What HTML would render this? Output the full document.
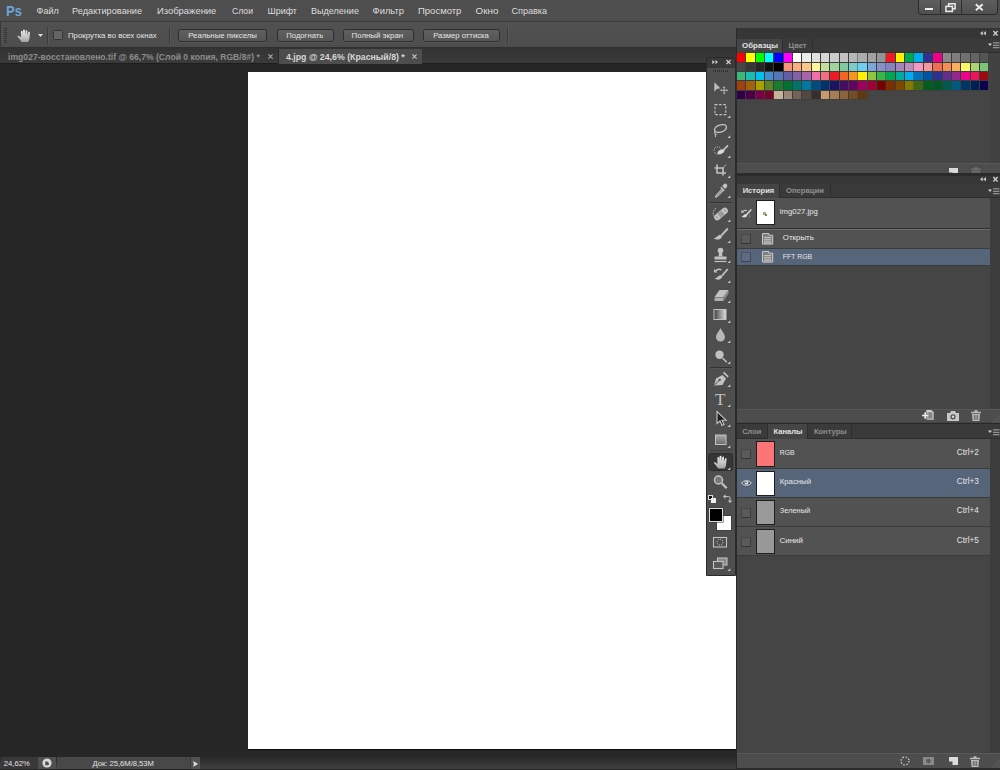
<!DOCTYPE html><html lang="ru"><head><meta charset="utf-8"><title>Photoshop</title><style>
*{box-sizing:border-box;margin:0;padding:0}
html,body{width:1000px;height:770px;overflow:hidden;background:#262626}
body{position:relative;font-family:"Liberation Sans",sans-serif;font-size:9.4px;color:#d6d6d6}
div,span,i,svg{position:absolute;display:block;white-space:nowrap}
i{font-style:normal}
svg{overflow:visible}
/* menu */
#menubar{left:0;top:0;width:1000px;height:22px;background:#4e4e4e;border-bottom:1px solid #3c3c3c}

#ps{left:6px;top:0px;font-size:16px;font-weight:bold;color:#6ea6dd;line-height:20px;letter-spacing:0.5px}
/* options bar */
#optbar{left:0;top:22px;width:1000px;height:26px;background:linear-gradient(#515151,#4d4d4d);border-bottom:1px solid #303030;border-left:1px solid #383838}


.vsep{width:1px;background:#3c3c3c;box-shadow:1px 0 0 #595959}
/* tab bar */
#tabbar{left:0;top:48px;width:736px;height:16px;background:linear-gradient(#333,#3b3b3b);border-bottom:1px solid #1e1e1e}
.dtab{top:49px;height:15px;font-weight:bold;font-size:8.6px;line-height:15px}
/* right dock */
.strip{left:0;width:263px;background:#363636}
.tabrow{left:0;width:263px;background:#3a3a3a;border-bottom:1px solid #2e2e2e}
.ptab{top:0;height:100%;font-size:8.8px;font-weight:bold;color:#8f8f8f;border-right:1px solid #2e2e2e}
.ptab.on{background:#454545;color:#e0e0e0}
.ptab span{left:0;right:0;text-align:center;top:0}
.botbar{left:0;width:263px;background:#4c4c4c;border-top:1px solid #5a5a5a}
i.s{width:8.5px;height:8.4px;box-shadow:0 0 0 .45px #3a3a3a}
.row{left:0;width:253px;border-bottom:1px solid #3a3a3a}
.row.sel{background:#56637a}
.row span{font-size:9px;color:#e4e4e4}
.eyebox{width:10px;height:10px;background:#505050;border:1px solid #3a3a3a;border-right-color:#5c5c5c;border-bottom-color:#5c5c5c}
.thumb{width:19px;height:25px;border:1px solid #222}
/* toolbar */
#tools{left:705.5px;top:56.5px;width:30px;height:519.5px;background:#4e4e4e;border:1px solid #2a2a2a;border-radius:2px 2px 0 0}
#tools .hd{left:0;top:0;width:28px;height:10px;background:#383838}
#tools svg{left:0;width:28px;overflow:visible}
.hsep{left:3px;width:22px;height:1px;background:#333;box-shadow:0 1px 0 #565656}
/* status */
#status{left:0;top:756.5px;width:736px;height:12px;background:linear-gradient(#292929,#414141)}
</style></head><body>
<div style="left:248px;top:72.4px;width:500px;height:676.7px;background:#fff;box-shadow:0 1px 0 #0c0c0c"></div>
<div id="menubar"></div><span style="left:6.00px;top:1px;font-size:15.40px;line-height:19px;color:#6ba3da;font-weight:bold;transform:scaleX(0.848);transform-origin:0 0;">Ps</span><span style="left:36.60px;top:5px;font-size:9.02px;line-height:12px;color:#dedede;">Файл</span><span style="left:72.00px;top:5px;font-size:9.21px;line-height:12px;color:#dedede;">Редактирование</span><span style="left:157.00px;top:4px;font-size:9.43px;line-height:13px;color:#dedede;">Изображение</span><span style="left:232.00px;top:5px;font-size:8.64px;line-height:12px;color:#dedede;">Слои</span><span style="left:267.60px;top:5px;font-size:8.94px;line-height:12px;color:#dedede;">Шрифт</span><span style="left:311.00px;top:5px;font-size:9.06px;line-height:12px;color:#dedede;">Выделение</span><span style="left:372.60px;top:5px;font-size:9.35px;line-height:12px;color:#dedede;">Фильтр</span><span style="left:418.00px;top:4px;font-size:9.51px;line-height:13px;color:#dedede;">Просмотр</span><span style="left:475.60px;top:4px;font-size:9.81px;line-height:13px;color:#dedede;">Окно</span><span style="left:511.60px;top:5px;font-size:9.02px;line-height:12px;color:#dedede;">Справка</span><div style="left:918px;top:-1px;width:80px;height:15.5px;background:linear-gradient(#5e5e5e,#4f4f4f);border:1px solid #2b2b2b;border-radius:0 0 3px 3px"></div><div style="left:939.5px;top:0px;width:1px;height:14px;background:#2e2e2e;"></div><div style="left:960.5px;top:0px;width:1px;height:14px;background:#2e2e2e;"></div><div style="left:925px;top:8px;width:8px;height:2.2px;background:#ececec;"></div><svg style="left:944.5px;top:2.5px" width="11" height="9" viewBox="0 0 11 9"><rect x="3.6" y=".8" width="6.5" height="5" fill="none" stroke="#ececec" stroke-width="1.5"/><rect x=".9" y="3.400" width="6.5" height="5" fill="#555" stroke="#ececec" stroke-width="1.5"/></svg><svg style="left:975px;top:4px" width="8.5" height="6.5" viewBox="0 0 8.5 6.5"><path d="M.8 .3L7.700 6.200M7.700 .3L.8 6.200" stroke="#ececec" stroke-width="1.900"/></svg>
<div id="optbar"></div><svg style="left:4px;top:28px" width="3" height="15" viewBox="0 0 3 15"><path d="M0 .5h3M0 2.5h3M0 4.5h3M0 6.5h3M0 8.5h3M0 10.5h3M0 12.5h3M0 14.5h3" stroke="#363636" stroke-width="1"/></svg><svg style="left:17px;top:28.5px" width="15" height="14" viewBox="0 0 15 14"><path transform="scale(1.100,.96)" d="M4.2 13.5C3.2 11.5 1.4 9.6 0.6 8.2c-.5-.9.6-1.600 1.400-.9l1.600 1.500V2.600c0-1 1.500-1 1.600 0l.3 3.600V1.300c0-1.100 1.600-1.100 1.700 0l.2 4.800.5-4.200c.1-1 1.600-.9 1.600.1l-.2 4.600 1-3.200c.3-.9 1.700-.5 1.500.5L11.300 9.800c-.2 1.400-.8 2.600-1.300 3.700z" fill="url(#gr3)"/></svg><svg style="left:37.5px;top:33.5px" width="5" height="3" viewBox="0 0 5 3"><path d="M0 0h5L2.5 3z" fill="#dcdcdc"/></svg><div class="vsep" style="left:47px;top:27px;height:17px"></div><div style="left:53.4px;top:30px;width:10px;height:10.2px;background:#646464;border:1px solid #343434;border-radius:1.5px"></div><span style="left:68.00px;top:30px;font-size:7.82px;line-height:11px;color:#e4e4e4;">Прокрутка во всех окнах</span><div class="vsep" style="left:169px;top:27px;height:17px"></div><div style="left:178.4px;top:28.8px;width:88.9px;height:13px;background:linear-gradient(#606060,#555555);border:1px solid #2e2e2e;border-radius:2.5px;box-shadow:0 1px 0 rgba(255,255,255,.06)"></div><span style="left:188.20px;top:30px;font-size:7.80px;line-height:11px;color:#e4e4e4;">Реальные пикселы</span><div style="left:276.5px;top:28.8px;width:57.1px;height:13px;background:linear-gradient(#606060,#555555);border:1px solid #2e2e2e;border-radius:2.5px;box-shadow:0 1px 0 rgba(255,255,255,.06)"></div><span style="left:286.30px;top:30px;font-size:7.67px;line-height:11px;color:#e4e4e4;">Подогнать</span><div style="left:342.7px;top:28.8px;width:71.8px;height:13px;background:linear-gradient(#606060,#555555);border:1px solid #2e2e2e;border-radius:2.5px;box-shadow:0 1px 0 rgba(255,255,255,.06)"></div><span style="left:351.60px;top:30px;font-size:7.87px;line-height:11px;color:#e4e4e4;">Полный экран</span><div style="left:423.1px;top:28.8px;width:76.6px;height:13px;background:linear-gradient(#606060,#555555);border:1px solid #2e2e2e;border-radius:2.5px;box-shadow:0 1px 0 rgba(255,255,255,.06)"></div><span style="left:433.20px;top:30px;font-size:7.69px;line-height:11px;color:#e4e4e4;">Размер оттиска</span><div class="vsep" style="left:507px;top:27px;height:17px"></div>
<div id="tabbar"></div><div style="left:1px;top:49px;width:278px;height:15px;background:transparent;border-right:1px solid #2a2a2a"></div><span style="left:8.10px;top:51px;font-size:8.61px;line-height:12px;color:#8c8c8c;font-weight:bold;">img027-восстановлено.tif @ 66,7% (Слой 0 копия, RGB/8#) *</span><svg style="left:267.5px;top:53.9px" width="5" height="5" viewBox="0 0 5 5"><path d="M.4 .4l4.200 4.200M4.600 .4l-4.200 4.200" stroke="#a6a6a6" stroke-width="1.200"/></svg><div style="left:279px;top:49px;width:143px;height:15px;background:#4d4d4d;"></div><span style="left:286.00px;top:51px;font-size:8.78px;line-height:12px;color:#d6d6d6;font-weight:bold;">4.jpg @ 24,6% (Красный/8) *</span><svg style="left:411.8px;top:53.9px" width="5" height="5" viewBox="0 0 5 5"><path d="M.4 .4l4.200 4.200M4.600 .4l-4.200 4.200" stroke="#c2c2c2" stroke-width="1.100"/></svg>
<div id="status"></div><div style="left:1px;top:756.5px;width:37px;height:12px;background:#383838;"></div><span style="left:3.80px;top:758px;font-size:7.67px;line-height:11px;color:#e2e2e2;">24,62%</span><div style="left:38px;top:756.5px;width:18px;height:12px;background:#4f4f4f;"></div><svg style="left:42px;top:757.5px" width="10" height="10" viewBox="0 0 10 10"><circle cx="5" cy="5" r="4.6" fill="#d8d8d8"/><path d="M3.2 3.5h2.300l1.300 1.300v2.400h-3.600z" fill="#4f4f4f"/></svg><div style="left:57px;top:756.5px;width:133px;height:12px;background:#484848;"></div><span style="left:92.40px;top:758px;font-size:7.63px;line-height:11px;color:#e2e2e2;">Док: 25,6M/8,53M</span><div style="left:190px;top:756.5px;width:10px;height:12px;background:#525252;border-left:1px solid #3a3a3a"></div><svg style="left:193px;top:761.3px" width="5" height="5.8" viewBox="0 0 5 5.8"><path d="M0 0L5 2.900L0 5.800L1 2.900z" fill="#e6e6e6"/></svg>
<div style="left:736px;top:27.5px;width:264px;height:742.5px;background:#454545;border-left:1px solid #2a2a2a"></div><div style="left:737px;top:27.5px;width:263px;height:11px;background:#363636;"></div><svg style="left:980px;top:31.2px" width="6" height="4.5" viewBox="0 0 6 4.5"><path d="M2.800 0v4.500L0 2.250zM6 0v4.500L3.200 2.250z" fill="#c4c4c4"/></svg><svg style="left:993.2px;top:31.2px" width="5" height="4.5" viewBox="0 0 5 4.5"><path d="M.4 0L4.600 4.500M4.600 0L.4 4.500" stroke="#d0d0d0" stroke-width="1.300"/></svg><div style="left:737px;top:38.5px;width:263px;height:14px;background:#3a3a3a;border-bottom:1px solid #2e2e2e"></div><div style="left:737px;top:38.5px;width:45.5px;height:14px;background:#454545;border-right:1px solid #2e2e2e;"></div><span style="left:742.00px;top:40px;font-size:7.93px;line-height:11px;color:#e2e2e2;font-weight:bold;">Образцы</span><div style="left:782.5px;top:38.5px;width:30px;height:14px;background:#3a3a3a;border-right:1px solid #2e2e2e;border-bottom:1px solid #2e2e2e"></div><span style="left:788.60px;top:40px;font-size:7.61px;line-height:11px;color:#909090;font-weight:bold;">Цвет</span><svg style="left:988px;top:41.9px" width="12" height="7" viewBox="0 0 12 7"><path d="M0 1.5h4L2 4z" fill="#d0d0d0"/><path d="M5 .9h6.500M5 3.300h6.500M5 5.700h6.500" stroke="#ababab" stroke-width="1"/></svg><div style="left:990.3px;top:52.5px;width:9.7px;height:110.2px;background:#414141;"></div><i class="s" style="left:736.80px;top:53.40px;background:#ff0000"></i>
<i class="s" style="left:746.15px;top:53.40px;background:#ffff00"></i>
<i class="s" style="left:755.50px;top:53.40px;background:#00ff00"></i>
<i class="s" style="left:764.85px;top:53.40px;background:#00ffff"></i>
<i class="s" style="left:774.20px;top:53.40px;background:#0000ff"></i>
<i class="s" style="left:783.55px;top:53.40px;background:#ff00ff"></i>
<i class="s" style="left:792.90px;top:53.40px;background:#ffffff"></i>
<i class="s" style="left:802.25px;top:53.40px;background:#ebebeb"></i>
<i class="s" style="left:811.60px;top:53.40px;background:#e1e1e1"></i>
<i class="s" style="left:820.95px;top:53.40px;background:#d7d7d7"></i>
<i class="s" style="left:830.30px;top:53.40px;background:#cccccc"></i>
<i class="s" style="left:839.65px;top:53.40px;background:#c2c2c2"></i>
<i class="s" style="left:849.00px;top:53.40px;background:#b7b7b7"></i>
<i class="s" style="left:858.35px;top:53.40px;background:#acacac"></i>
<i class="s" style="left:867.70px;top:53.40px;background:#a1a1a1"></i>
<i class="s" style="left:877.05px;top:53.40px;background:#959595"></i>
<i class="s" style="left:886.40px;top:53.40px;background:#ed1c24"></i>
<i class="s" style="left:895.75px;top:53.40px;background:#fff200"></i>
<i class="s" style="left:905.10px;top:53.40px;background:#00a651"></i>
<i class="s" style="left:914.45px;top:53.40px;background:#00aeef"></i>
<i class="s" style="left:923.80px;top:53.40px;background:#2e3192"></i>
<i class="s" style="left:933.15px;top:53.40px;background:#ec008c"></i>
<i class="s" style="left:942.50px;top:53.40px;background:#898989"></i>
<i class="s" style="left:951.85px;top:53.40px;background:#7d7d7d"></i>
<i class="s" style="left:961.20px;top:53.40px;background:#707070"></i>
<i class="s" style="left:970.55px;top:53.40px;background:#636363"></i>
<i class="s" style="left:979.90px;top:53.40px;background:#555555"></i>
<i class="s" style="left:736.80px;top:62.75px;background:#464646"></i>
<i class="s" style="left:746.15px;top:62.75px;background:#363636"></i>
<i class="s" style="left:755.50px;top:62.75px;background:#252525"></i>
<i class="s" style="left:764.85px;top:62.75px;background:#111111"></i>
<i class="s" style="left:774.20px;top:62.75px;background:#000000"></i>
<i class="s" style="left:783.55px;top:62.75px;background:#f69679"></i>
<i class="s" style="left:792.90px;top:62.75px;background:#f9ad81"></i>
<i class="s" style="left:802.25px;top:62.75px;background:#fdc689"></i>
<i class="s" style="left:811.60px;top:62.75px;background:#fff799"></i>
<i class="s" style="left:820.95px;top:62.75px;background:#c4df9b"></i>
<i class="s" style="left:830.30px;top:62.75px;background:#a3d39c"></i>
<i class="s" style="left:839.65px;top:62.75px;background:#82ca9c"></i>
<i class="s" style="left:849.00px;top:62.75px;background:#7accc8"></i>
<i class="s" style="left:858.35px;top:62.75px;background:#6dcff6"></i>
<i class="s" style="left:867.70px;top:62.75px;background:#7da7d9"></i>
<i class="s" style="left:877.05px;top:62.75px;background:#8393ca"></i>
<i class="s" style="left:886.40px;top:62.75px;background:#8781bd"></i>
<i class="s" style="left:895.75px;top:62.75px;background:#a186be"></i>
<i class="s" style="left:905.10px;top:62.75px;background:#bd8cbf"></i>
<i class="s" style="left:914.45px;top:62.75px;background:#f49ac1"></i>
<i class="s" style="left:923.80px;top:62.75px;background:#f5989d"></i>
<i class="s" style="left:933.15px;top:62.75px;background:#f26c4f"></i>
<i class="s" style="left:942.50px;top:62.75px;background:#f68e56"></i>
<i class="s" style="left:951.85px;top:62.75px;background:#fbaf5d"></i>
<i class="s" style="left:961.20px;top:62.75px;background:#fff568"></i>
<i class="s" style="left:970.55px;top:62.75px;background:#acd373"></i>
<i class="s" style="left:979.90px;top:62.75px;background:#7cc576"></i>
<i class="s" style="left:736.80px;top:72.10px;background:#3cb878"></i>
<i class="s" style="left:746.15px;top:72.10px;background:#1cbbb4"></i>
<i class="s" style="left:755.50px;top:72.10px;background:#00bff3"></i>
<i class="s" style="left:764.85px;top:72.10px;background:#448ccb"></i>
<i class="s" style="left:774.20px;top:72.10px;background:#5674b9"></i>
<i class="s" style="left:783.55px;top:72.10px;background:#605ca8"></i>
<i class="s" style="left:792.90px;top:72.10px;background:#855fa8"></i>
<i class="s" style="left:802.25px;top:72.10px;background:#a864a8"></i>
<i class="s" style="left:811.60px;top:72.10px;background:#f06eaa"></i>
<i class="s" style="left:820.95px;top:72.10px;background:#f26d7d"></i>
<i class="s" style="left:830.30px;top:72.10px;background:#ed1c24"></i>
<i class="s" style="left:839.65px;top:72.10px;background:#f26522"></i>
<i class="s" style="left:849.00px;top:72.10px;background:#f7941d"></i>
<i class="s" style="left:858.35px;top:72.10px;background:#fff200"></i>
<i class="s" style="left:867.70px;top:72.10px;background:#8dc63f"></i>
<i class="s" style="left:877.05px;top:72.10px;background:#39b54a"></i>
<i class="s" style="left:886.40px;top:72.10px;background:#00a651"></i>
<i class="s" style="left:895.75px;top:72.10px;background:#00a99d"></i>
<i class="s" style="left:905.10px;top:72.10px;background:#00aeef"></i>
<i class="s" style="left:914.45px;top:72.10px;background:#0072bc"></i>
<i class="s" style="left:923.80px;top:72.10px;background:#0054a6"></i>
<i class="s" style="left:933.15px;top:72.10px;background:#2e3192"></i>
<i class="s" style="left:942.50px;top:72.10px;background:#662d91"></i>
<i class="s" style="left:951.85px;top:72.10px;background:#92278f"></i>
<i class="s" style="left:961.20px;top:72.10px;background:#ec008c"></i>
<i class="s" style="left:970.55px;top:72.10px;background:#ed145b"></i>
<i class="s" style="left:979.90px;top:72.10px;background:#9e0b0f"></i>
<i class="s" style="left:736.80px;top:81.45px;background:#a0410d"></i>
<i class="s" style="left:746.15px;top:81.45px;background:#a36209"></i>
<i class="s" style="left:755.50px;top:81.45px;background:#aba000"></i>
<i class="s" style="left:764.85px;top:81.45px;background:#598527"></i>
<i class="s" style="left:774.20px;top:81.45px;background:#1a7b30"></i>
<i class="s" style="left:783.55px;top:81.45px;background:#007236"></i>
<i class="s" style="left:792.90px;top:81.45px;background:#00746b"></i>
<i class="s" style="left:802.25px;top:81.45px;background:#0076a3"></i>
<i class="s" style="left:811.60px;top:81.45px;background:#004b80"></i>
<i class="s" style="left:820.95px;top:81.45px;background:#003471"></i>
<i class="s" style="left:830.30px;top:81.45px;background:#1b1464"></i>
<i class="s" style="left:839.65px;top:81.45px;background:#440e62"></i>
<i class="s" style="left:849.00px;top:81.45px;background:#630460"></i>
<i class="s" style="left:858.35px;top:81.45px;background:#9e005d"></i>
<i class="s" style="left:867.70px;top:81.45px;background:#9e0039"></i>
<i class="s" style="left:877.05px;top:81.45px;background:#790000"></i>
<i class="s" style="left:886.40px;top:81.45px;background:#7b2e00"></i>
<i class="s" style="left:895.75px;top:81.45px;background:#7d4900"></i>
<i class="s" style="left:905.10px;top:81.45px;background:#827b00"></i>
<i class="s" style="left:914.45px;top:81.45px;background:#406618"></i>
<i class="s" style="left:923.80px;top:81.45px;background:#005e20"></i>
<i class="s" style="left:933.15px;top:81.45px;background:#005826"></i>
<i class="s" style="left:942.50px;top:81.45px;background:#005952"></i>
<i class="s" style="left:951.85px;top:81.45px;background:#005b7f"></i>
<i class="s" style="left:961.20px;top:81.45px;background:#003663"></i>
<i class="s" style="left:970.55px;top:81.45px;background:#002157"></i>
<i class="s" style="left:979.90px;top:81.45px;background:#0d004c"></i>
<i class="s" style="left:736.80px;top:90.80px;background:#32004b"></i>
<i class="s" style="left:746.15px;top:90.80px;background:#4b0049"></i>
<i class="s" style="left:755.50px;top:90.80px;background:#7b0046"></i>
<i class="s" style="left:764.85px;top:90.80px;background:#7a0026"></i>
<i class="s" style="left:774.20px;top:90.80px;background:#c7b299"></i>
<i class="s" style="left:783.55px;top:90.80px;background:#998675"></i>
<i class="s" style="left:792.90px;top:90.80px;background:#736357"></i>
<i class="s" style="left:802.25px;top:90.80px;background:#534741"></i>
<i class="s" style="left:811.60px;top:90.80px;background:#362f2d"></i>
<i class="s" style="left:820.95px;top:90.80px;background:#c69c6d"></i>
<i class="s" style="left:830.30px;top:90.80px;background:#a67c52"></i>
<i class="s" style="left:839.65px;top:90.80px;background:#8c6239"></i>
<i class="s" style="left:849.00px;top:90.80px;background:#754c24"></i>
<i class="s" style="left:858.35px;top:90.80px;background:#603913"></i><div style="left:737px;top:162.7px;width:263px;height:10.3px;background:#4d4d4d;border-top:1px solid #585858"></div><svg style="left:949px;top:167.6px" width="9" height="8" viewBox="0 0 9 8"><path d="M0 0h9v8h-5.500v-3.500h-3.500z" fill="#d8d8d8"/></svg><svg style="left:970.8px;top:166.8px" width="10" height="11" viewBox="0 0 10 11"><path d="M0 2.5h10M3.5 1h3" stroke="#707070" stroke-width="1.4"/><path d="M1 4h8l-.6 7h-6.800z" fill="#707070"/><path d="M3.3 5v5M5 5v5M6.700 5v5" stroke="#4d4d4d" stroke-width=".8"/></svg><div style="left:736px;top:173px;width:264px;height:2.5px;background:#2b2b2b;"></div><div style="left:737px;top:175.5px;width:263px;height:8px;background:#363636;"></div><svg style="left:980px;top:176.8px" width="6" height="4.5" viewBox="0 0 6 4.5"><path d="M2.800 0v4.500L0 2.250zM6 0v4.500L3.200 2.250z" fill="#c4c4c4"/></svg><svg style="left:993.2px;top:176.8px" width="5" height="4.5" viewBox="0 0 5 4.5"><path d="M.4 0L4.600 4.500M4.600 0L.4 4.500" stroke="#d0d0d0" stroke-width="1.300"/></svg><div style="left:737px;top:183.5px;width:263px;height:14.5px;background:#3a3a3a;border-bottom:1px solid #2e2e2e"></div><div style="left:737px;top:183.5px;width:43px;height:14.5px;background:#454545;border-right:1px solid #2e2e2e;"></div><span style="left:742.70px;top:185px;font-size:7.55px;line-height:11px;color:#e2e2e2;font-weight:bold;">История</span><div style="left:780px;top:183.5px;width:51px;height:14.5px;background:#3a3a3a;border-right:1px solid #2e2e2e;border-bottom:1px solid #2e2e2e"></div><span style="left:786.00px;top:185px;font-size:7.68px;line-height:11px;color:#909090;font-weight:bold;">Операции</span><svg style="left:988px;top:187.5px" width="12" height="7" viewBox="0 0 12 7"><path d="M0 1.5h4L2 4z" fill="#d0d0d0"/><path d="M5 .9h6.500M5 3.300h6.500M5 5.700h6.500" stroke="#ababab" stroke-width="1"/></svg><div style="left:990px;top:198px;width:10px;height:211.3px;background:#3d3d3d;"></div><div style="left:737px;top:198px;width:253px;height:29.5px;background:#525252;"></div><svg style="left:741px;top:208.5px" width="11" height="9.5" viewBox="0 0 11 9.5"><path d="M10.300 .6L5.600 5.400" stroke="#dcdcdc" stroke-width="1.500"/><path d="M5 5c-1.800 0-2.400 2-4.600 2.600c2 1.500 5.400 .9 5.900-1.400z" fill="#dcdcdc"/><path d="M1 3.200c1.200-1.700 3.200-2.200 5-1.400" fill="none" stroke="#c4c4c4" stroke-width="1.100"/><path d="M.3 1v2.800h2.800z" fill="#c4c4c4"/><path d="M8.500 5.500c.6 1.200 .2 2.600-.8 3.400" fill="none" stroke="#b0b0b0" stroke-width=".8" stroke-dasharray="1 .8"/></svg><div style="left:755.8px;top:199.9px;width:19.4px;height:25.5px;background:#fff;border:1px solid #1e1e1e"></div><div style="left:763.3px;top:212.3px;width:2.6px;height:3.2px;background:#b0a675;"></div><div style="left:765px;top:214px;width:2.2px;height:2.2px;background:#7a7a7a;"></div><span style="left:779.80px;top:206px;font-size:7.77px;line-height:11px;color:#e6e6e6;">img027.jpg</span><div style="left:737px;top:227.5px;width:253px;height:2px;background:#6e6e6e;border-top:1px solid #303030"></div><div style="left:737px;top:229.5px;width:253px;height:19.2px;background:#525252;border-bottom:1px solid #3c3c3c"></div><div style="left:741px;top:234px;width:10px;height:10px;background:#5a5a5a;border:1px solid;border-color:#484848 #3c3c3c #363636 #444"></div><svg style="left:761.7px;top:233.4px" width="11.2" height="11.6" viewBox="0 0 11.2 11.6"><path d="M.5 .6h6.300v1.600h3.900v8.900h-10.200z" fill="#7c7c7c" stroke="#cdcdcd" stroke-width="1"/><path d="M2 4.400h7.200M2 6.300h7.200M2 8.100h7.200M2 9.800h7.200" stroke="#d4d4d4" stroke-width=".85"/></svg><span style="left:782.80px;top:232px;font-size:7.92px;line-height:11px;color:#e6e6e6;">Открыть</span><div style="left:737px;top:248.7px;width:253px;height:17px;background:#57657a;border-bottom:1px solid #3c3c3c"></div><div style="left:741px;top:252px;width:10px;height:10px;background:#5e6b82;border:1px solid;border-color:#4a5568 #3d4758 #384254 #465166"></div><svg style="left:761.7px;top:251.2px" width="11.2" height="11.6" viewBox="0 0 11.2 11.6"><path d="M.5 .6h6.300v1.600h3.900v8.900h-10.200z" fill="#7c7c7c" stroke="#cdcdcd" stroke-width="1"/><path d="M2 4.400h7.200M2 6.300h7.200M2 8.100h7.200M2 9.800h7.200" stroke="#d4d4d4" stroke-width=".85"/></svg><span style="left:782.80px;top:252px;font-size:6.90px;line-height:9px;color:#e6e6e6;">FFT RGB</span><div style="left:737px;top:408.8px;width:263px;height:13.7px;background:#4d4d4d;border-top:1px solid #585858"></div><svg style="left:922px;top:410.3px" width="12" height="10" viewBox="0 0 12 10"><path d="M4.500 0h4.500l3 2.500v7.500h-7.500z" fill="#a4a4a4"/><path d="M4.500 0h4.500l3 2.500h-7.500z" fill="#d0d0d0"/><path d="M0 5.500h6.500M3.200 2.300v6.400" stroke="#ececec" stroke-width="1.700"/><path d="M6.5 3h3M6.500 5h3M6.500 7h3" stroke="#4c4c4c" stroke-width=".8"/></svg><svg style="left:947.3px;top:410.8px" width="11.5" height="9.5" viewBox="0 0 11.5 9.5"><path d="M0 2h3l1-2h4l1 2h3v8h-12z" fill="#c8c8c8"/><circle cx="6" cy="5.800" r="2.600" fill="#4c4c4c"/><circle cx="6" cy="5.800" r="1.300" fill="#dcdcdc"/></svg><svg style="left:970.5px;top:409.7px" width="10" height="11" viewBox="0 0 10 11"><path d="M0 2.5h10M3.5 1h3" stroke="#bcbcbc" stroke-width="1.4"/><path d="M1 4h8l-.6 7h-6.800z" fill="#bcbcbc"/><path d="M3.3 5v5M5 5v5M6.700 5v5" stroke="#4d4d4d" stroke-width=".8"/></svg><svg style="left:992px;top:414.5px" width="8" height="8" viewBox="0 0 8 8"><path d="M8 0L0 8M8 3L3 8M8 6L6 8" stroke="#606060" stroke-width=".9"/></svg><div style="left:736px;top:422.5px;width:264px;height:1.7px;background:#282828;"></div><div style="left:737px;top:424.1px;width:263px;height:14.7px;background:#3a3a3a;border-bottom:1px solid #2e2e2e"></div><div style="left:737px;top:424.1px;width:30.5px;height:14.7px;background:#3a3a3a;border-right:1px solid #2e2e2e;border-bottom:1px solid #2e2e2e"></div><span style="left:742.30px;top:426px;font-size:7.35px;line-height:11px;color:#909090;font-weight:bold;">Слои</span><div style="left:767.5px;top:424.1px;width:40.1px;height:14.7px;background:#454545;border-right:1px solid #2e2e2e;"></div><span style="left:773.50px;top:426px;font-size:7.60px;line-height:11px;color:#e2e2e2;font-weight:bold;">Каналы</span><div style="left:807.6px;top:424.1px;width:44.4px;height:14.7px;background:#3a3a3a;border-right:1px solid #2e2e2e;border-bottom:1px solid #2e2e2e"></div><span style="left:813.90px;top:426px;font-size:7.56px;line-height:11px;color:#909090;font-weight:bold;">Контуры</span><svg style="left:988px;top:428.9px" width="12" height="7" viewBox="0 0 12 7"><path d="M0 1.5h4L2 4z" fill="#d0d0d0"/><path d="M5 .9h6.500M5 3.300h6.500M5 5.700h6.500" stroke="#ababab" stroke-width="1"/></svg><div style="left:990px;top:438.8px;width:10px;height:314px;background:#3d3d3d;"></div><div style="left:737px;top:439px;width:253px;height:29.5px;background:#525252;border-bottom:1px solid #3a3a3a"></div><div style="left:741px;top:449.2px;width:10px;height:10px;background:#5a5a5a;border:1px solid;border-color:#484848 #3c3c3c #363636 #444"></div><div style="left:755.8px;top:441.1px;width:19.4px;height:25.6px;background:#fb7478;border:1px solid #1e1e1e"></div><span style="left:779.80px;top:448px;font-size:6.84px;line-height:9px;color:#e6e6e6;">RGB</span><span style="left:956.80px;top:447px;font-size:8.13px;line-height:11px;color:#e6e6e6;">Ctrl+2</span><div style="left:737px;top:468.5px;width:253px;height:29px;background:#57657a;border-bottom:1px solid #3a3a3a"></div><svg style="left:741px;top:479px" width="11" height="8" viewBox="0 0 11 8"><path d="M.6 4C2.600 1 8.400 1 10.400 4C8.400 7 2.600 7 .6 4z" fill="#4a5468" stroke="#dcdcdc" stroke-width="1"/><circle cx="5.500" cy="3.700" r="1.900" fill="#dcdcdc"/><circle cx="5" cy="3.200" r=".8" fill="#4a5468"/></svg><div style="left:755.8px;top:470.6px;width:19.4px;height:25.6px;background:#ffffff;border:1px solid #1e1e1e"></div><span style="left:779.80px;top:476px;font-size:7.75px;line-height:11px;color:#e6e6e6;">Красный</span><span style="left:956.80px;top:476px;font-size:8.13px;line-height:11px;color:#e6e6e6;">Ctrl+3</span><div style="left:737px;top:497.5px;width:253px;height:29px;background:#525252;border-bottom:1px solid #3a3a3a"></div><div style="left:741px;top:507.7px;width:10px;height:10px;background:#5a5a5a;border:1px solid;border-color:#484848 #3c3c3c #363636 #444"></div><div style="left:755.8px;top:499.6px;width:19.4px;height:25.6px;background:#999999;border:1px solid #1e1e1e"></div><span style="left:779.80px;top:505px;font-size:7.42px;line-height:11px;color:#e6e6e6;">Зеленый</span><span style="left:956.80px;top:505px;font-size:8.13px;line-height:11px;color:#e6e6e6;">Ctrl+4</span><div style="left:737px;top:526.5px;width:253px;height:29px;background:#525252;border-bottom:1px solid #3a3a3a"></div><div style="left:741px;top:536.7px;width:10px;height:10px;background:#5a5a5a;border:1px solid;border-color:#484848 #3c3c3c #363636 #444"></div><div style="left:755.8px;top:528.6px;width:19.4px;height:25.6px;background:#989898;border:1px solid #1e1e1e"></div><span style="left:779.50px;top:535px;font-size:7.97px;line-height:11px;color:#e6e6e6;">Синий</span><span style="left:956.80px;top:535px;font-size:8.13px;line-height:11px;color:#e6e6e6;">Ctrl+5</span><div style="left:737px;top:752.8px;width:263px;height:15.2px;background:#4d4d4d;border-top:1px solid #5a5a5a"></div><svg style="left:900px;top:756px" width="10" height="10" viewBox="0 0 10 10"><circle cx="5" cy="5" r="4" fill="none" stroke="#cfcfcf" stroke-width="1.200" stroke-dasharray="1.600 1.540"/></svg><svg style="left:923px;top:757px" width="11" height="8" viewBox="0 0 11 8"><rect width="11" height="8" fill="#8a8a8a"/><circle cx="5.500" cy="4" r="2.300" fill="#5a5a5a"/></svg><svg style="left:949px;top:757px" width="9" height="8" viewBox="0 0 9 8"><path d="M0 0h9v8h-5.500v-3.500h-3.500z" fill="#dcdcdc"/></svg><svg style="left:970px;top:755.5px" width="10" height="11" viewBox="0 0 10 11"><path d="M0 2.5h10M3.5 1h3" stroke="#bcbcbc" stroke-width="1.4"/><path d="M1 4h8l-.6 7h-6.800z" fill="#bcbcbc"/><path d="M3.3 5v5M5 5v5M6.700 5v5" stroke="#4d4d4d" stroke-width=".8"/></svg><svg style="left:992px;top:760px" width="8" height="8" viewBox="0 0 8 8"><path d="M8 0L0 8M8 3L3 8M8 6L6 8" stroke="#606060" stroke-width=".9"/></svg><div style="left:736px;top:768px;width:264px;height:2px;background:#2a2a2a;"></div>
<div id="tools"><div class="hd"></div><svg style="left:5.700px;top:2.400px;width:6.300px" width="6.300" height="4.200" viewBox="0 0 7 5"><path d="M0 0v5L3.200 2.500zM3.800 0v5L7 2.500z" fill="#c4c4c4"/></svg><svg style="left:19.500px;top:2.400px;width:5px" width="5" height="4.200" viewBox="0 0 6 5"><path d="M.5 0L5.500 5M5.500 0L.5 5" stroke="#d0d0d0" stroke-width="1.500"/></svg><svg style="left:6px;top:12.500px;width:16px" width="16" height="2" viewBox="0 0 16 3" preserveAspectRatio="none"><path d="M.5 0v3M2.500 0v3M4.500 0v3M6.500 0v3M8.500 0v3M10.500 0v3M12.500 0v3M14.500 0v3" stroke="#2e2e2e" stroke-width="1"/></svg><svg style="top:20.8px" height="20" viewBox="0 0 28 20"><path d="M7.300 4.200L13.400 10.300L9.800 11L7.300 13.800z" fill="#bdbdbd"/><path d="M17.100 9.300v6M14.100 12.300h6" stroke="#c2c2c2" stroke-width=".9"/><path d="M17.100 8.300l1.300 1.500h-2.600zM17.100 16.300l1.300-1.500h-2.600zM13.100 12.300l1.500-1.300v2.600zM21.100 12.300l-1.500-1.300v2.600z" fill="#c2c2c2"/></svg><svg style="top:42.0px" height="20" viewBox="0 0 28 20"><rect x="8" y="4.600" width="10.800" height="10" fill="none" stroke="#c2c2c2" stroke-width="1.100" stroke-dasharray="2.600 1.500"/><path d="M23.300 15.200v2.800h-2.800z" fill="#c8c8c8"/></svg><svg style="top:62.3px" height="20" viewBox="0 0 28 20"><ellipse cx="13.500" cy="8.500" rx="6.200" ry="3.600" transform="rotate(-18 13.500 8.500)" fill="none" stroke="#c2c2c2" stroke-width="1.300"/><path d="M8.500 11c-1.500 1 -1 3 .5 3.500c-1 .5-1 2 0 2.500" fill="none" stroke="#c2c2c2" stroke-width="1.100"/><path d="M23.300 15.200v2.800h-2.800z" fill="#c8c8c8"/></svg><svg style="top:82.7px" height="20" viewBox="0 0 28 20"><circle cx="10.600" cy="10.400" r="3.600" fill="none" stroke="#c2c2c2" stroke-width="1" stroke-dasharray="1.400 1.200"/><path d="M21 5.300L16.500 9.800" stroke="#c2c2c2" stroke-width="1.700"/><ellipse cx="14" cy="11.800" rx="3.700" ry="2" transform="rotate(-28 14 11.800)" fill="#d8d8d8"/><path d="M23.300 15.200v2.800h-2.800z" fill="#c8c8c8"/></svg><svg style="top:102.5px" height="20" viewBox="0 0 28 20"><path d="M10 4.600V13H19M7.500 8H16V15.500" fill="none" stroke="#c2c2c2" stroke-width="1.600"/><path d="M19 4.500l-3 3.500" stroke="#c2c2c2" stroke-width=".8"/><path d="M23.300 15.200v2.800h-2.800z" fill="#c8c8c8"/></svg><svg style="top:122.5px" height="20" viewBox="0 0 28 20"><path d="M16.800 4.300a2 2 0 0 1 2.900 2.900l-1.700 1.700-2.900-2.900z" fill="#c2c2c2"/><path d="M13.800 7.300l3.400 3.400" stroke="#c2c2c2" stroke-width="1.500"/><path d="M14.600 9.200l1.700 1.700-5.600 5.600-2.300 .9 .7-2.500z" fill="#9a9a9a" stroke="#c2c2c2" stroke-width=".9"/><path d="M23.300 15.200v2.800h-2.800z" fill="#c8c8c8"/></svg><div class="hsep" style="top:144.300px"></div><svg style="top:146.2px" height="20" viewBox="0 0 28 20"><g transform="rotate(-40 14 10)"><rect x="6" y="6.800" width="16" height="6.400" rx="3.200" fill="#c2c2c2"/><rect x="11.500" y="7.300" width="5" height="5.400" fill="#9a9a9a"/><path d="M8.500 8.500v3M19.500 8.500v3" stroke="#777" stroke-width=".8"/></g><path d="M9 4.500c-3 1-3.500 5-2 8" fill="none" stroke="#c2c2c2" stroke-width="1" stroke-dasharray="1.500 1.200"/><path d="M23.300 15.200v2.800h-2.800z" fill="#c8c8c8"/></svg><svg style="top:167.0px" height="20" viewBox="0 0 28 20"><path d="M20.800 3.500L14.500 10.300" stroke="#c2c2c2" stroke-width="1.900"/><path d="M13.600 9.800c-2.500 0-3.500 2.700-7 3.700c3 2 7.800 1.200 8.500-2z" fill="#c2c2c2"/><path d="M23.300 15.200v2.800h-2.800z" fill="#c8c8c8"/></svg><svg style="top:187.8px" height="20" viewBox="0 0 28 20"><circle cx="13.500" cy="5.500" r="2.800" fill="#c2c2c2"/><path d="M12 7h3l.5 4.500h-4z" fill="#c2c2c2"/><path d="M7.500 11.500h12v3h-12z" fill="#c2c2c2"/><path d="M7.500 16.500h12" stroke="#c2c2c2" stroke-width="1.200"/><path d="M23.300 15.200v2.800h-2.800z" fill="#c8c8c8"/></svg><svg style="top:207.5px" height="20" viewBox="0 0 28 20"><path d="M20.800 4L14.800 11" stroke="#c2c2c2" stroke-width="1.800"/><path d="M13.800 10.300c-2.300 0-3.300 2.500-6.300 3.300c2.800 1.900 7.200 1.100 7.800-1.800z" fill="#c2c2c2"/><path d="M8 6.500c2-2.200 4.500-2.600 6.500-1.500" fill="none" stroke="#c2c2c2" stroke-width="1.400"/><path d="M7 4v3.500h3.500z" fill="#c2c2c2"/><path d="M23.300 15.200v2.800h-2.800z" fill="#c8c8c8"/></svg><svg style="top:227.3px" height="20" viewBox="0 0 28 20"><path d="M12.500 5h9l-5 7h-9z" fill="#c2c2c2"/><path d="M7.500 12.500h9v3.500h-9z" fill="#b0b0b0"/><path d="M16.500 12l5-7v3.500l-5 7.500z" fill="#8e8e8e"/><path d="M23.300 15.200v2.800h-2.800z" fill="#c8c8c8"/></svg><svg style="left:0;top:0;width:0;height:0" width="0" height="0"><defs><linearGradient id="gr1" x1="0" x2="1" y1="0" y2="0"><stop offset="0" stop-color="#404040"/><stop offset="1" stop-color="#e0e0e0"/></linearGradient><linearGradient id="gr2" x1="0" x2="0" y1="0" y2="1"><stop offset="0" stop-color="#a8a8a8"/><stop offset="1" stop-color="#6a6a6a"/></linearGradient><linearGradient id="gr3" x1="0" x2="0" y1="0" y2="1"><stop offset="0" stop-color="#f2f2f2"/><stop offset="1" stop-color="#a4a4a4"/></linearGradient></defs></svg><svg style="top:247.7px" height="20" viewBox="0 0 28 20"><rect x="7" y="4.500" width="12" height="10" fill="url(#gr1)" stroke="#c2c2c2" stroke-width="1"/><path d="M23.300 15.200v2.800h-2.800z" fill="#c8c8c8"/></svg><svg style="top:267.8px" height="20" viewBox="0 0 28 20"><path d="M13.500 3c1.500 3.500 4.500 6 4.500 9a4.500 4.500 0 0 1-9 0c0-3 3-5.500 4.500-9z" fill="#b8b8b8"/><path d="M23.300 15.200v2.800h-2.800z" fill="#c8c8c8"/></svg><svg style="top:288.3px" height="20" viewBox="0 0 28 20"><circle cx="12.500" cy="8.800" r="4.200" fill="#c2c2c2"/><path d="M15.500 12l4.300 4.300" stroke="#c2c2c2" stroke-width="1.500"/><path d="M23.300 15.200v2.800h-2.800z" fill="#c8c8c8"/></svg><div class="hsep" style="top:309.300px"></div><svg style="top:311.5px" height="20" viewBox="0 0 28 20"><path d="M7 16.500l2-7 6.500-3.500 3.500 3.500-3.500 6.500z" fill="#c2c2c2"/><path d="M16 4l4.500 4.500 1.200-1.200L17.200 2.800z" fill="#c2c2c2"/><path d="M7.500 16l5-5" stroke="#484848" stroke-width="1"/><circle cx="12.800" cy="10.800" r="1.100" fill="#484848"/><path d="M23.300 15.200v2.800h-2.800z" fill="#c8c8c8"/></svg><svg style="top:331.5px" height="20" viewBox="0 0 28 20"><text x="13.300" y="15.500" text-anchor="middle" font-family="Liberation Serif,serif" font-size="17" fill="#c2c2c2">T</text><path d="M23.300 15.200v2.800h-2.800z" fill="#c8c8c8"/></svg><svg style="top:351.7px" height="20" viewBox="0 0 28 20"><path d="M10 2.500v12l3-2.500 2 4.500 2-1-2-4.300h4z" fill="#1e1e1e" stroke="#c8c8c8" stroke-width="1.100"/><path d="M23.300 15.200v2.800h-2.800z" fill="#c8c8c8"/></svg><svg style="top:372.5px" height="20" viewBox="0 0 28 20"><rect x="8.500" y="5" width="10.500" height="9.500" fill="url(#gr2)" stroke="#c2c2c2" stroke-width="1"/><path d="M23.300 15.200v2.800h-2.800z" fill="#c8c8c8"/></svg><div class="hsep" style="top:392.500px;background:#414141;box-shadow:none"></div><div style="left:1.500px;top:395.500px;width:24.500px;height:18px;background:#363636;border-radius:2.500px;border:1px solid #2c2c2c"></div><svg style="top:394.3px" height="20" viewBox="0 0 28 20"><path transform="translate(6.4,3.3) scale(1.12,.98)" d="M4.200 13.500C3.200 11.500 1.400 9.600 0.600 8.200c-.5-.9.6-1.600 1.400-.9l1.600 1.500V2.600c0-1 1.500-1 1.600 0l.3 3.600V1.300c0-1.100 1.600-1.100 1.700 0l.2 4.800.5-4.200c.1-1 1.600-.9 1.600.1l-.2 4.600 1-3.200c.3-.9 1.700-.5 1.500.5L11.300 9.800c-.2 1.400-.8 2.600-1.300 3.700z" fill="url(#gr3)"/><path d="M23.300 15.200v2.800h-2.800z" fill="#c8c8c8"/></svg><svg style="top:414.1px" height="20" viewBox="0 0 28 20"><circle cx="11.500" cy="8" r="4" fill="#777" stroke="#c2c2c2" stroke-width="1.500"/><path d="M14.700 11.200l5 5" stroke="#c2c2c2" stroke-width="2.200"/></svg><div style="left:1.500px;top:437.500px;width:5px;height:5px;background:#111;border:.5px solid #ddd"></div><div style="left:4.500px;top:440.500px;width:5px;height:5px;background:#eee"></div><svg style="left:16px;top:436px;width:9px" width="9" height="9" viewBox="0 0 9 9"><path d="M2 2.500h3.500c1.200 0 1.500 .5 1.500 1.500v2.500" fill="none" stroke="#c2c2c2" stroke-width="1"/><path d="M0 2.500l2.500-2.300v4.600zM7 9l-2.300-2.600h4.600z" fill="#c2c2c2"/></svg><div style="left:10px;top:458px;width:14.500px;height:14px;background:#fff;box-shadow:0 0 0 .5px #333"></div><div style="left:2px;top:450px;width:14.500px;height:14px;background:#000;border:1px solid #ddd;box-shadow:0 0 0 .5px #333"></div><svg style="top:474.4px" height="20" viewBox="0 0 28 20"><rect x="6.500" y="5.500" width="13" height="9.500" fill="none" stroke="#c2c2c2" stroke-width="1.100"/><circle cx="13" cy="10.200" r="3" fill="none" stroke="#c2c2c2" stroke-width="1" stroke-dasharray="1.300 1"/></svg><svg style="top:495.2px" height="20" viewBox="0 0 28 20"><rect x="10.500" y="5" width="9.500" height="7" fill="#888" stroke="#c2c2c2" stroke-width="1.100"/><rect x="6.500" y="8.500" width="9.500" height="7" fill="#5a5a5a" stroke="#c2c2c2" stroke-width="1.100"/><path d="M23.300 15.200v2.800h-2.800z" fill="#c8c8c8"/></svg></div>
</body></html>
